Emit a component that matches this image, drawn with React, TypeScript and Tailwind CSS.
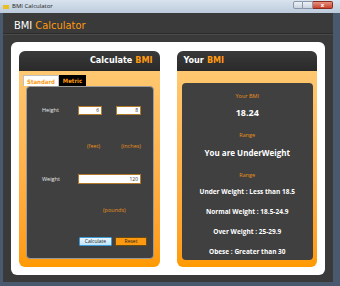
import React from "react";

const ui = { fontFamily: '"Open Sans", "Noto Sans", sans-serif' };
const fancy = { fontFamily: '"DejaVu Sans Condensed", "DejaVu Sans", sans-serif', fontStretch: "condensed" as const };

function CardHeader({ children, right }: { children: React.ReactNode; right?: boolean }) {
  return (
    <div
      className={`h-[20px] flex items-center rounded-t-[6px] bg-gradient-to-b from-[#3a3a3a] to-[#2a2a2a] px-[7px] text-[9px] font-bold text-white ${right ? "justify-end" : "justify-start"}`}
      style={fancy}
    >
      {children}
    </div>
  );
}

function Input({ value, w, h = 9 }: { value: string; w: number; h?: number }) {
  return (
    <div
      className="flex items-center justify-end border border-[#b07a2a] bg-white pr-[2px] text-[5px] leading-none text-[#333]"
      style={{ width: w, height: h }}
    >
      {value}
    </div>
  );
}

function StandardForm() {
  return (
    <div className="flex-1 rounded-[4px] border border-[#9a9a9a] bg-[#404040] pl-[15px] text-[5.5px] text-[#e8e8e8]" style={ui}>
      <div className="mt-[19px] flex h-[9px] items-center">
        <span className="w-[36px]">Height</span>
        <Input value="6" w={24} />
        <div className="w-[14px]" />
        <Input value="8" w={25} />
      </div>
      <div className="mt-[27px] flex h-[9px] items-center text-[#e8901a]">
        <span className="ml-[45px]">(feet)</span>
        <span className="ml-[21px]">(inches)</span>
      </div>
      <div className="mt-[23px] flex h-[10px] items-center">
        <span className="w-[36px]">Weight</span>
        <Input value="120" w={63} h={10} />
      </div>
      <div className="mt-[22px] flex h-[9px] items-center text-[#e8901a]">
        <span className="ml-[61px]">(pounds)</span>
      </div>
      <div className="mt-[22px] flex h-[9px] items-center gap-[3px] pl-[37px] text-[5px] text-[#222]">
        <div className="flex h-[9px] w-[33px] items-center justify-center rounded-[1px] border border-[#3a9ad8] bg-gradient-to-b from-[#eaf6fd] to-[#bfe3f8]">
          Calculate
        </div>
        <div className="flex h-[9px] w-[32px] items-center justify-center rounded-[1px] border border-[#6a4a10] bg-[#ff9a10]">
          Reset
        </div>
      </div>
    </div>
  );
}

function Line({ mt, children, className }: { mt: number; children: React.ReactNode; className: string }) {
  return (
    <div className={`flex h-[10px] items-center justify-center whitespace-nowrap ${className}`} style={{ marginTop: mt }}>
      {children}
    </div>
  );
}

export default function App() {
  return (
    <div className="flex h-[286px] w-[340px] flex-col bg-[#4a5a6e]">
      {/* title bar */}
      <div className="relative flex h-[13px] items-center bg-gradient-to-b from-[#d9e3ee] to-[#bccbdc] pl-[3px]">
        <div className="h-[4px] w-[6px] bg-[#e8c020]" />
        <span className="ml-[3px] text-[6px] text-[#1a1a1a]" style={ui}>BMI Calculator</span>
        <div className="absolute right-[7px] top-[1px] flex h-[8px]">
          <div className="w-[10px] rounded-l-[2px] border border-[#8a97a8] bg-gradient-to-b from-[#eef2f7] to-[#c9d3df]" />
          <div className="w-[10px] border border-l-0 border-[#8a97a8] bg-gradient-to-b from-[#eef2f7] to-[#c9d3df]" />
          <div className="flex w-[20px] items-center justify-center rounded-r-[2px] border border-l-0 border-[#8a2a20] bg-gradient-to-b from-[#e8907e] to-[#c8402a] text-[6px] font-bold text-white">
            x
          </div>
        </div>
      </div>

      {/* client area */}
      <div className="ml-[3px] mr-[7px] mb-[4px] flex flex-1 flex-col bg-[#3a3a3a]">
        <div className="flex h-[20px] items-end pb-[2px] pl-[11px] text-[11px] leading-none" style={fancy}>
          <span className="text-white">BMI</span>
          <span className="ml-[3px] text-[#ff9a10]">Calculator</span>
        </div>
        <div className="h-[2px] bg-[#2c2c2c] border-b border-[#4a4a4a]" />
        <div className="mx-[8px] mt-[7px] mb-[7px] flex flex-1 gap-[17px] rounded-[6px] bg-white px-[8px] pt-[9px] pb-[8px]">
          {/* left card */}
          <div className="flex w-[141px] flex-col rounded-[6px]">
            <CardHeader right>
              Calculate<span className="ml-[3px] text-[#ff9a10]">BMI</span>
            </CardHeader>
            <div className="flex flex-1 flex-col rounded-b-[6px] bg-gradient-to-b from-[#ffc870] to-[#ff9a00] pl-[7px] pr-[6px] pb-[8px] pt-[4px]">
              <div className="-ml-[3px] flex h-[11px] text-[6px] font-bold" style={fancy}>
                <div className="flex w-[36px] items-center justify-center border border-[#c0c0c0] border-b-0 bg-white text-[#ff9a10]">Standard</div>
                <div className="flex w-[27px] items-center justify-center bg-black text-[#ff9a10]">Metric</div>
              </div>
              <div className="flex flex-1 flex-col">
                <StandardForm />
              </div>
            </div>
          </div>

          {/* right card */}
          <div className="flex w-[141px] flex-col rounded-[6px]">
            <CardHeader>
              Your<span className="ml-[3px] text-[#ff9a10]">BMI</span>
            </CardHeader>
            <div className="flex flex-1 flex-col rounded-b-[6px] bg-gradient-to-b from-[#ffc870] to-[#ff9a00] pl-[5px] pr-[4px] pb-[7px] pt-[12px]">
              <div className="flex flex-1 flex-col rounded-[4px] bg-[#404040] font-bold text-white" style={ui}>
                <Line mt={8} className="text-[5.5px] font-normal text-[#e8901a]">Your BMI</Line>
                <Line mt={7} className="text-[9px]">18.24</Line>
                <Line mt={12} className="text-[5.5px] font-normal text-[#e8901a]">Range</Line>
                <Line mt={8} className="text-[8px]">You are UnderWeight</Line>
                <Line mt={12} className="text-[5.5px] font-normal text-[#e8901a]">Range</Line>
                <Line mt={7} className="text-[6.5px]">Under Weight : Less than 18.5</Line>
                <Line mt={10} className="text-[6.5px]">Normal Weight : 18.5-24.9</Line>
                <Line mt={10} className="text-[6.5px]">Over Weight : 25-29.9</Line>
                <Line mt={10} className="text-[6.5px]">Obese : Greater than 30</Line>
              </div>
            </div>
          </div>
        </div>
      </div>
    </div>
  );
}
